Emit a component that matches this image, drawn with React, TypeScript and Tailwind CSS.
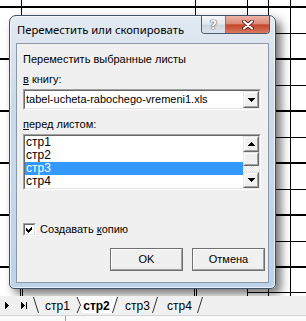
import React from 'react';

// classic 3D bevels used by the old Excel dialog controls
const Sunken: React.FC<{ className?: string; children?: React.ReactNode }> = ({ className = '', children }) => (
  <div className={`border border-t-[#a0a0a0] border-l-[#a0a0a0] border-r-white border-b-white ${className}`}>
    <div className="h-full w-full border border-t-[#696969] border-l-[#696969] border-r-[#e3e3e3] border-b-[#e3e3e3] bg-white flex">
      {children}
    </div>
  </div>
);

const Raised: React.FC<{ className?: string; children?: React.ReactNode }> = ({ className = '', children }) => (
  <div className={`border border-t-[#e3e3e3] border-l-[#e3e3e3] border-r-[#696969] border-b-[#696969] ${className}`}>
    <div className="h-full w-full border border-t-white border-l-white border-r-[#a0a0a0] border-b-[#a0a0a0] bg-[#f0f0f0] flex items-center justify-center">
      {children}
    </div>
  </div>
);

const PushButton: React.FC<{ children: React.ReactNode }> = ({ children }) => (
  <div className="w-[73px] h-[23px] border border-[#6f6f6f]">
    <div className="h-full w-full border border-t-white border-l-white border-r-[#a0a0a0] border-b-[#a0a0a0] bg-[#f0f0f0] flex items-center justify-center">
      {children}
    </div>
  </div>
);

const Arrow: React.FC<{ dir: 'up' | 'down' }> = ({ dir }) => (
  <svg width="7" height="4" viewBox="0 0 7 4" shapeRendering="crispEdges">
    {dir === 'down' ? <polygon points="0,0 7,0 3.5,4" fill="#000" /> : <polygon points="3.5,0 7,4 0,4" fill="#000" />}
  </svg>
);

const SheetGrid: React.FC = () => {
  const thick = [6, 58, 110, 162, 214, 266];
  const thin = [33, 85, 137, 189, 241, 292];
  return (
    <svg className="absolute inset-0" width="306" height="296" shapeRendering="crispEdges">
      {thick.map((y) => (
        <rect key={'t' + y} x="0" y={y} width="306" height="2" fill="#000" />
      ))}
      {thin.map((y) => (
        <rect key={'n' + y} x="247" y={y} width="59" height="1" fill="#000" />
      ))}
      <rect x="21" y="0" width="1" height="284" fill="#000" />
      <rect x="20" y="284" width="1" height="12" fill="#000" />
      <rect x="22" y="284" width="1" height="12" fill="#000" />
      <rect x="195" y="0" width="1" height="284" fill="#000" />
      <rect x="194" y="284" width="1" height="12" fill="#000" />
      <rect x="196" y="284" width="1" height="12" fill="#000" />
      <rect x="247" y="0" width="1" height="296" fill="#000" />
      <rect x="268" y="0" width="1" height="296" fill="#000" />
      <rect x="290" y="0" width="1" height="296" fill="#000" />
    </svg>
  );
};

const sheets = [
  { name: 'стр1', w: 'w-[41px]', active: false },
  { name: 'стр2', w: 'w-[37px]', active: true },
  { name: 'стр3', w: 'w-[45px]', active: false },
  { name: 'стр4', w: 'w-[39px]', active: false },
];

const TabBar: React.FC = () => (
  <div className="relative h-[19px] shrink-0 bg-[#f0f0f0] flex items-center">
    <svg className="absolute inset-0" width="306" height="19">
      {/* nav arrows */}
      <g shapeRendering="crispEdges">
        <polygon points="5,6 9,9.5 5,13" fill="#000" />
        <polygon points="21,6 25,9.5 21,13" fill="#000" />
        <rect x="26" y="6" width="1" height="7" fill="#000" />
      </g>
      {/* active tab face */}
      <polygon points="77,0 82,17 112,17 117,0" fill="#fff" />
      {/* tab edges */}
      <g stroke="#333" strokeWidth="1" fill="none">
        <path d="M33.5 1 L38.5 17" />
        <path d="M77 1 L80.5 9 L77 17" />
        <path d="M112.5 17 L117.5 1" />
        <path d="M152.5 17 L157.5 1" />
        <path d="M197.5 17 L202.5 1" />
      </g>
    </svg>
    <div className="relative flex pl-[37px] text-[12px] leading-[14px] pt-[1px] font-['Liberation_Sans',sans-serif]">
      {sheets.map((s) => (
        <span key={s.name} className={`${s.w} text-center ${s.active ? 'font-bold' : ''}`}>
          {s.name}
        </span>
      ))}
    </div>
  </div>
);

const TitleButtons: React.FC = () => (
  <div className="ml-auto -mr-[1px] flex shrink-0 rounded-b-[4px] border border-t-0 border-[#4b5b6d] overflow-hidden">
    <div className="w-[24px] h-[17px] flex items-center justify-center border-r border-[#6b7a8c] bg-[linear-gradient(to_bottom,#f4f7fa_0%,#e2e8ef_48%,#cbd5e0_52%,#dce5ee_100%)]">
      <span className="text-[13px] leading-[13px] font-bold text-white font-['DejaVu_Sans',sans-serif] [text-shadow:0_0_1px_#555,0_0_1px_#555,0_0_1px_#555]">
        ?
      </span>
    </div>
    <div className="w-[43px] h-[17px] flex items-center justify-center bg-[linear-gradient(to_bottom,#ebb3a7_0%,#dc8b78_46%,#c4452b_52%,#d87a61_100%)]">
      <svg width="12" height="10" viewBox="0 0 12 10">
        <path d="M2 1.5 L10 8.5 M10 1.5 L2 8.5" stroke="#5b1e14" strokeWidth="3.8" strokeLinecap="round" />
        <path d="M2 1.5 L10 8.5 M10 1.5 L2 8.5" stroke="#fff" strokeWidth="2.2" strokeLinecap="round" />
      </svg>
    </div>
  </div>
);

const items = ['стр1', 'стр2', 'стр3', 'стр4'];

const Dialog: React.FC = () => (
  <div className="absolute left-[9px] top-[15px] w-[267px] h-[274px] rounded-t-[7px] rounded-b-[5px] border border-[#3f5266] bg-[linear-gradient(to_bottom,#e3eaf2_0%,#cddbe9_30%,#bcd3ea_100%)] shadow-[inset_0_0_0_1px_rgba(255,255,255,0.65),5px_5px_10px_rgba(0,0,0,0.55)] flex flex-col px-[6px] pb-[5px]">
    <div className="h-[27px] flex items-start shrink-0">
      <span className="pl-[1px] pt-[6px] whitespace-nowrap text-[11.25px] leading-[16px] text-black font-['Noto_Sans',sans-serif]">
        Переместить или скопировать
      </span>
      <TitleButtons />
    </div>

    <div className="flex-1 bg-[#f0f0f0] border border-[#8c99a8] flex flex-col pl-[6px] pr-[7px] text-[11px] leading-[13px] text-black font-['Liberation_Sans',sans-serif]">
      <div className="mt-[9px]">Переместить выбранные листы</div>
      <div className="mt-[7px]">
        <span className="underline underline-offset-[1px]">в</span> книгу:
      </div>
      <Sunken className="mt-[3px] h-[21px]">
        <span className="flex-1 pl-[1px] self-center">tabel-ucheta-rabochego-vremeni1.xls</span>
        <Raised className="w-[16px] h-full">
          <Arrow dir="down" />
        </Raised>
      </Sunken>

      <div className="mt-[8px]">
        <span className="underline underline-offset-[1px]">п</span>еред листом:
      </div>
      <Sunken className="mt-[3px] h-[56px]">
        <div className="flex-1 flex flex-col overflow-hidden text-[12px]">
          {items.map((it) => (
            <div
              key={it}
              className={`h-[13px] shrink-0 pl-[1px] leading-[13px] ${it === 'стр3' ? 'bg-[#3399ff] text-white' : ''}`}
            >
              {it}
            </div>
          ))}
        </div>
        <div className="w-[16px] flex flex-col">
          <Raised className="h-[16px] shrink-0">
            <Arrow dir="up" />
          </Raised>
          <Raised className="h-[14px] shrink-0" />
          <div className="flex-1 bg-[repeating-conic-gradient(#ffffff_0%_25%,#e4e4e4_0%_50%)] bg-size-[2px_2px]" />
          <Raised className="h-[16px] shrink-0">
            <Arrow dir="down" />
          </Raised>
        </div>
      </Sunken>

      <div className="mt-[33px] flex items-center h-[13px]">
        <Sunken className="w-[13px] h-[13px]">
          <svg width="9" height="9" viewBox="0 0 9 9" shapeRendering="crispEdges">
            <polygon points="1,3 3,5 7,1 7,4 3,8 1,6" fill="#000" />
          </svg>
        </Sunken>
        <span className="ml-[4px]">
          Создавать <span className="underline underline-offset-[1px]">к</span>опию
        </span>
      </div>

      <div className="mt-[12px] -mr-[4px] flex justify-end gap-[9px]">
        <PushButton>OK</PushButton>
        <PushButton>Отмена</PushButton>
      </div>
    </div>
  </div>
);

export default function App() {
  return (
    <div className="w-[306px] h-[321px] bg-white overflow-hidden flex flex-col">
      <div className="relative h-[296px] shrink-0">
        <SheetGrid />
        <Dialog />
      </div>
      <TabBar />
      <div className="relative flex-1 bg-[#fafafa] border-t border-[#d4d4d4]">
        <div className="absolute left-[65px] top-0 bottom-0 w-px bg-[#a0a0a0]" />
      </div>
    </div>
  );
}
